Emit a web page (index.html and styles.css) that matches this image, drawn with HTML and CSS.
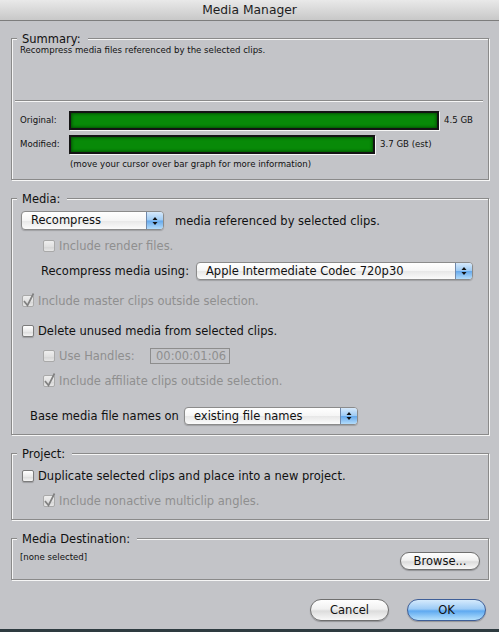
FILE: index.html
```html
<!DOCTYPE html>
<html lang="en">
<head>
    <meta charset="UTF-8">
    <meta name="viewport" content="width=device-width, initial-scale=1.0">
    <title>Media Manager</title>
    <link rel="stylesheet" href="styles.css">
</head>
<body>
    <div class="dialog">
        <div class="titlebar">Media Manager</div>

        <div class="content">
            <!-- Summary -->
            <div class="group summary">
                <div class="group-title">Summary:</div>
                <div class="summary-text">Recompress media files referenced by the selected clips.</div>
                <div class="divider"></div>
                <div class="bar-row">
                    <span class="bar-label">Original:</span>
                    <span class="bar" style="width: 370px"></span>
                    <span class="bar-value">4.5 GB</span>
                </div>
                <div class="bar-row">
                    <span class="bar-label">Modified:</span>
                    <span class="bar" style="width: 306px"></span>
                    <span class="bar-value">3.7 GB (est)</span>
                </div>
                <div class="bar-hint">(move your cursor over bar graph for more information)</div>
            </div>

            <!-- Media -->
            <div class="group">
                <div class="group-title">Media:</div>
                <div class="row row--popup">
                    <div class="popup popup--action">
                        <span class="popup-text">Recompress</span>
                        <span class="popup-arrows"><svg width="6" height="10" viewBox="0 0 6 10"><path d="M0.5 4 L3 1 L5.5 4 Z M0.5 6 L3 9 L5.5 6 Z" fill="#111"/></svg></span>
                    </div>
                    <span class="row-text">media referenced by selected clips.</span>
                </div>
                <div class="row indent is-disabled">
                    <span class="check"></span>
                    <span>Include render files.</span>
                </div>
                <div class="row indent">
                    <span class="field-label field-label--codec">Recompress media using:</span>
                    <div class="popup popup--codec">
                        <span class="popup-text">Apple Intermediate Codec 720p30</span>
                        <span class="popup-arrows"><svg width="6" height="10" viewBox="0 0 6 10"><path d="M0.5 4 L3 1 L5.5 4 Z M0.5 6 L3 9 L5.5 6 Z" fill="#111"/></svg></span>
                    </div>
                </div>
                <div class="row row--major is-disabled">
                    <span class="check"><svg class="tick" width="12" height="12" viewBox="0 0 12 12"><path d="M2 6 L5.5 10.5 L11.5 -1.5" fill="none" stroke="currentColor" stroke-width="1.7"/></svg></span>
                    <span>Include master clips outside selection.</span>
                </div>
                <div class="row row--major">
                    <span class="check"></span>
                    <span>Delete unused media from selected clips.</span>
                </div>
                <div class="row indent is-disabled">
                    <span class="check"></span>
                    <span class="field-label field-label--handles">Use Handles:</span>
                    <span class="text-field">00:00:01:06</span>
                </div>
                <div class="row indent is-disabled">
                    <span class="check"><svg class="tick" width="12" height="12" viewBox="0 0 12 12"><path d="M2 6 L5.5 10.5 L11.5 -1.5" fill="none" stroke="currentColor" stroke-width="1.7"/></svg></span>
                    <span>Include affiliate clips outside selection.</span>
                </div>
                <div class="row row--base">
                    <span class="field-label field-label--base">Base media file names on</span>
                    <div class="popup popup--names">
                        <span class="popup-text">existing file names</span>
                        <span class="popup-arrows"><svg width="6" height="10" viewBox="0 0 6 10"><path d="M0.5 4 L3 1 L5.5 4 Z M0.5 6 L3 9 L5.5 6 Z" fill="#111"/></svg></span>
                    </div>
                </div>
            </div>

            <!-- Project -->
            <div class="group">
                <div class="group-title">Project:</div>
                <div class="row row--first">
                    <span class="check"></span>
                    <span>Duplicate selected clips and place into a new project.</span>
                </div>
                <div class="row indent is-disabled">
                    <span class="check"><svg class="tick" width="12" height="12" viewBox="0 0 12 12"><path d="M2 6 L5.5 10.5 L11.5 -1.5" fill="none" stroke="currentColor" stroke-width="1.7"/></svg></span>
                    <span>Include nonactive multiclip angles.</span>
                </div>
            </div>

            <!-- Media Destination -->
            <div class="group">
                <div class="group-title">Media Destination:</div>
                <div class="dest-row">
                    <span class="dest-path">[none selected]</span>
                    <button class="btn btn--small">Browse...</button>
                </div>
            </div>
        </div>

        <div class="actions">
            <button class="btn">Cancel</button>
            <button class="btn btn--default">OK</button>
        </div>
    </div>
</body>
</html>
```

FILE: styles.css
```css
/* Aqua style dialog */
* {
    box-sizing: border-box;
}

body {
    margin: 0;
    background-color: #2e3b40;
    font-family: "Lucida Grande", "DejaVu Sans", sans-serif;
    font-size: 11.5px;
    color: #111;
}

.dialog {
    height: 629px;
    background-color: #c3c4c8;
    display: flex;
    flex-direction: column;
}

.titlebar {
    height: 21px;
    line-height: 20px;
    text-align: center;
    font-size: 12.3px;
    color: #1d1d1d;
    background: linear-gradient(#e9e9e9, #c8c8c8);
    border-bottom: 1px solid #7d7d7d;
}

.content {
    padding-top: 17px;
}

/* group boxes with etched border */
.group {
    margin: 0 10px 0 11px;
    padding: 0 8px 9px 8px;
    border: 1px solid #8a8a8a;
    box-shadow: inset 1px 1px 0 #f6f6f6, 1px 1px 0 #f6f6f6;
}

.group + .group {
    margin-top: 18px;
}

.group-title {
    width: fit-content;
    margin: -7px 0 0 -3px;
    padding: 0 7px 0 5px;
    line-height: 14px;
    background-color: #c3c4c8;
}

/* summary */
.summary {
    padding-bottom: 10px;
}

.summary-text {
    margin-top: -1px;
    height: 55px;
    font-size: 8.6px;
    line-height: 10px;
}

.divider {
    margin: 0 -3px 0 -5px;
    height: 2px;
    border-top: 1px solid #8a8a8a;
    border-bottom: 1px solid #f6f6f6;
}

.bar-row {
    display: flex;
    align-items: flex-start;
    height: 20px;
    margin-top: 4px;
    font-size: 8.6px;
    line-height: 19px;
}

.divider + .bar-row {
    margin-top: 9px;
}

.bar-label {
    width: 49px;
}

.bar {
    height: 19px;
    border: 2px solid #141414;
    background-color: #088a08;
    box-shadow: inset 0 0 3px 1px #035203, 1px 1px 0 #f6f6f6;
}

.bar-value {
    margin-left: 5px;
}

.bar-hint {
    margin: 4px 0 0 50px;
    font-size: 8.6px;
    line-height: 10px;
}

/* option rows */
.row {
    display: flex;
    align-items: center;
    height: 18px;
    margin-top: 7px;
    white-space: nowrap;
}

.row--popup {
    height: 19px;
    margin-top: 5px;
}

.row--first {
    margin-top: 6px;
}

.row--major {
    margin-top: 12px;
}

.row--base {
    margin-top: 17px;
    padding-left: 10px;
}

.indent {
    padding-left: 21px;
}

.is-disabled {
    color: #8f8f8f;
}

.check {
    flex: none;
    width: 12px;
    height: 12px;
    margin: 0 4px 0 2px;
    border: 1px solid #7c7c7c;
    border-radius: 2px;
    background: linear-gradient(#ffffff, #e9e9e9 55%, #dadada 56%, #f4f4f4);
    box-shadow: 0 1px 1px rgba(0, 0, 0, 0.2);
    color: #111;
}

.is-disabled .check {
    border-color: #a9a9a9;
    background: linear-gradient(#eeeeee, #e0e0e0 55%, #d4d4d4 56%, #e6e6e6);
    box-shadow: none;
    color: #808080;
}

.tick {
    display: block;
    margin: -1px 0 0 -1px;
    overflow: visible;
}

.row-text {
    margin-left: 11px;
}

.field-label--codec {
    width: 155px;
}

.field-label--handles {
    width: 91px;
}

.field-label--base {
    width: 154px;
}

/* popup menus */
.popup {
    display: flex;
    height: 19px;
    border: 1px solid #8b8b8b;
    border-radius: 4px;
    background: linear-gradient(#ffffff, #f5f5f5 50%, #e7e7e7 51%, #fbfbfb);
    box-shadow: 0 1px 1px rgba(0, 0, 0, 0.18);
    color: #111;
}

.popup--action {
    width: 143px;
    margin-left: 1px;
}

.popup--codec {
    width: 277px;
    height: 18px;
}

.popup--names {
    width: 174px;
    height: 18px;
}

.popup-text {
    flex: 1;
    padding-left: 9px;
    line-height: 16px;
}

.popup-arrows {
    width: 17px;
    display: flex;
    align-items: center;
    justify-content: center;
    border-left: 1px solid #6f88ab;
    border-radius: 0 3px 3px 0;
    background: linear-gradient(#d6e9fb, #9ecbf4 48%, #66a9ec 52%, #b3dcfb);
}

.text-field {
    width: 80px;
    height: 16px;
    padding-left: 5px;
    line-height: 14px;
    border: 1px solid #8d8d8d;
}

/* destination */
.dest-row {
    display: flex;
    justify-content: space-between;
    align-items: flex-start;
    margin-top: 6px;
}

.dest-path {
    font-size: 8.6px;
    line-height: 10px;
}

/* buttons */
.actions {
    display: flex;
    justify-content: flex-end;
    gap: 18px;
    padding: 19px 13px 0 0;
}

.btn {
    width: 79px;
    height: 22px;
    padding: 0;
    border: 1px solid #6f6f6f;
    border-radius: 11px;
    font-family: inherit;
    font-size: 11.5px;
    line-height: 20px;
    color: #111;
    background: linear-gradient(#fefefe, #f1f1f1 45%, #dcdcdc 55%, #f8f8f8);
    box-shadow: 0 1px 1px rgba(0, 0, 0, 0.25);
}

.btn--default {
    border-color: #3f5f98;
    background: linear-gradient(#d5eafc, #9ccbf6 45%, #5ea9f0 55%, #b5e1fd);
}

.btn--small {
    width: 80px;
    height: 18px;
    border-radius: 9px;
    line-height: 16px;
}
```
